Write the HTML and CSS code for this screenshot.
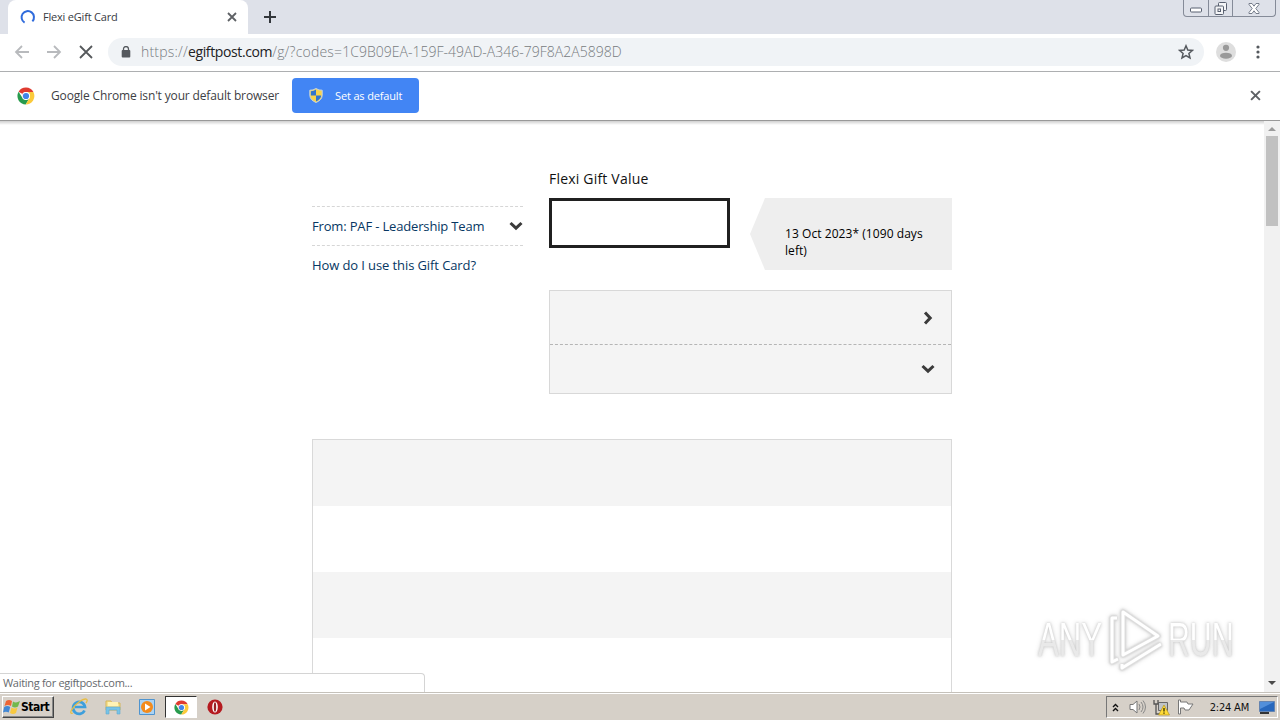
FILE: index.html
```html
<!DOCTYPE html>
<html lang="en">
<head>
<meta charset="utf-8">
<title>Flexi eGift Card</title>
<link rel="stylesheet" href="styles.css">
</head>
<body>
<svg class="defs" width="0" height="0" aria-hidden="true">
  <symbol id="chrome" viewBox="0 0 18 18">
    <circle cx="9" cy="9" r="8.5" fill="#fff"/>
    <path d="M9 9 1.6 4.7A8.5 8.5 0 0 1 16.4 5H9a4 4 0 0 0-3.5 6z" fill="#df3b30"/>
    <path d="M1.6 4.7A8.5 8.5 0 0 0 8.7 17.5L12.5 11 9 13 5.5 11z" fill="#289b4d"/>
    <path d="M16.4 5A8.5 8.5 0 0 1 8.7 17.5L12.5 11A4 4 0 0 0 9 5z" fill="#fbca3b"/>
    <circle cx="9" cy="9" r="4" fill="#fff"/><circle cx="9" cy="9" r="3.1" fill="#4285e8"/>
  </symbol>
  <symbol id="close" viewBox="0 0 10 10"><path d="m1 1 8 8M9 1 1 9" fill="none" stroke="currentColor" stroke-width="1.8"/></symbol>
  <symbol id="chevron" viewBox="0 0 14 10"><path d="m1.5 2 5.5 5.2L12.5 2" fill="none" stroke="#3b3b3b" stroke-width="3"/></symbol>
</svg>
<div class="screen">
  <header class="tabstrip">
    <div class="tab">
      <svg class="spinner" width="16" height="16" viewBox="0 0 16 16"><path d="M4.6 13.6A6.2 6.2 0 1 1 12.4 12.4" fill="none" stroke="#2f6bdc" stroke-width="2"/></svg>
      <span class="tab-title">Flexi eGift Card</span>
      <svg class="tab-close" width="10" height="10"><use href="#close"/></svg>
    </div>
    <svg class="new-tab" width="12" height="12" viewBox="0 0 12 12"><path d="M6 0v12M0 6h12" stroke="#32363b" stroke-width="2"/></svg>
    <div class="window-buttons">
      <span><svg width="12" height="6" viewBox="0 0 12 6"><rect x=".5" y="1" width="11" height="4" rx="1" fill="#fff" stroke="#596070"/></svg></span>
      <span><svg width="14" height="14" viewBox="0 0 14 14" fill="#f4f5f7" stroke="#596070"><rect x="4.500" y=".5" width="8" height="8" rx="1"/><rect x="1" y="4" width="8.500" height="8.500" rx="1"/><rect x="4" y="7" width="2.500" height="2.500"/></svg></span>
      <span><svg width="12" height="11" viewBox="0 0 12 11"><path d="M1 .5h3l2 2.700L8 .5h3v1L7.800 5.500 11 9.500v1H8L6 7.800 4 10.500H1v-1l3.200-4L1 1.500z" fill="#fff" stroke="#697080" stroke-width=".9"/></svg></span>
    </div>
  </header>

  <nav class="toolbar">
    <svg class="nav-icon faded back" width="16" height="14" viewBox="0 0 16 14"><path d="M15 7H2M8 1 2 7l6 6"/></svg>
    <svg class="nav-icon faded" width="16" height="14" viewBox="0 0 16 14"><path d="M0 7h13M7 1l6 6-6 6"/></svg>
    <svg class="nav-icon stop" width="14" height="14" viewBox="0 0 14 14"><path d="m1 1 12 12M13 1 1 13"/></svg>
    <div class="omnibox">
      <svg class="lock" width="10" height="12" viewBox="0 0 10 12"><rect x=".7" y="4" width="8.600" height="7.500" rx="1" fill="#55595e"/><path d="M2.500 5V3a2.500 2.500 0 0 1 5 0v2" fill="none" stroke="#55595e" stroke-width="1.300"/></svg>
      <span class="url"><span class="scheme">https://</span><span class="host">egiftpost.com</span><span class="path">/g/?codes=</span><span class="code">1C9B09EA-159F-49AD-A346-79F8A2A5898D</span></span>
      <svg class="star" width="16" height="16" viewBox="0 0 16 16"><path d="m8 1.800 1.800 4.200 4.600.4-3.500 3 1.100 4.500L8 11.500l-4 2.400 1.100-4.500-3.500-3L6.200 6z" fill="none" stroke="#55595e" stroke-width="1.500"/></svg>
    </div>
    <svg class="avatar" width="20" height="20" viewBox="0 0 20 20"><circle cx="10" cy="10" r="10" fill="#dedede"/><circle cx="10" cy="5.800" r="3.100" fill="#999"/><ellipse cx="10" cy="13.700" rx="6" ry="3" fill="#999"/></svg>
    <svg class="more" width="4" height="14" viewBox="0 0 4 14" fill="#55595e"><circle cx="2" cy="2" r="1.600"/><circle cx="2" cy="7" r="1.600"/><circle cx="2" cy="12" r="1.600"/></svg>
  </nav>

  <section class="infobar">
    <svg class="info-logo" width="18" height="18"><use href="#chrome"/></svg>
    <span class="info-text">Google Chrome isn't your default browser</span>
    <button class="default-button">
      <svg width="14" height="15" viewBox="0 0 14 15"><path d="M7 .5q3 2 6.200 1.700V7q0 5-6.200 7.500Q.8 12 .8 7V2.200Q4 2.500 7 .5z" fill="#f8d34c"/><path d="M7 1.500v6H1.800V3.200Q5 3 7 1.500zM7 7.500h5.200Q12 11 7 13.400z" fill="#3275cd"/><path d="M7 .5q3 2 6.200 1.700V7q0 5-6.200 7.500Q.8 12 .8 7V2.200Q4 2.500 7 .5z" fill="none" stroke="#c6d5df"/></svg>
      <span>Set as default</span>
    </button>
    <svg class="info-close" width="11" height="11"><use href="#close"/></svg>
  </section>

  <div class="viewport">
    <main class="page">
      <div class="summary">
        <aside class="links">
          <div class="from"><span>From: PAF - Leadership Team</span><svg width="14" height="10"><use href="#chevron"/></svg></div>
          <div class="how">How do I use this Gift Card?</div>
        </aside>
        <section class="gift">
          <div class="gift-label">Flexi Gift Value</div>
          <div class="gift-row">
            <div class="amount"></div>
            <div class="expiry"><span class="expiry-date">13 Oct 2023* (1090 days</span><span class="expiry-left">left)</span></div>
          </div>
          <div class="accordion">
            <div class="item first"><svg class="right" width="14" height="10"><use href="#chevron"/></svg></div>
            <div class="item"><svg width="14" height="10"><use href="#chevron"/></svg></div>
          </div>
        </section>
      </div>
      <div class="stripes"><div></div><div></div><div></div><div></div></div>
    </main>
    <div class="scrollbar">
      <svg width="8" height="4" viewBox="0 0 8 4"><path d="M0 4 4 0l4 4z" fill="#9b9b9b"/></svg>
      <div class="thumb"></div>
      <svg class="down" width="8" height="4" viewBox="0 0 8 4"><path d="m0 0 4 4 4-4z" fill="#4b4b4b"/></svg>
    </div>
    <div class="status"><span>Waiting for egiftpost.com...</span></div>
    <div class="watermark">
      <span class="any">ANY</span>
      <svg width="60" height="64" viewBox="0 0 60 64" fill="none" stroke-linejoin="round"><g stroke="#dedede" stroke-width="5"><path d="M17 4v43l35-19z"/><path d="M11 10H6v44l6-3M16 56v4l39-24"/></g><g stroke="#fff" stroke-width="3"><path d="M17 4v43l35-19z"/><path d="M11 10H6v44l6-3M16 56v4l39-24"/></g></svg>
      <span class="run">RUN</span>
    </div>
  </div>

  <footer class="taskbar">
    <div class="start">
      <svg width="18" height="16" viewBox="0 0 18 16"><path d="M3 2q3-2 6 0L8 7Q5 5 1.500 7z" fill="#ee6535"/><path d="M10 2.500q3 2 7-.5l-2 5.500q-3 2-6 0z" fill="#72b84c"/><path d="M1.200 8q3-2 6 0l-1.500 5.500Q3 12 0 13.500z" fill="#4388d5"/><path d="M8.500 8.500q3 2 6 0L13 14q-3 2-6 0z" fill="#f8c940"/></svg>
      <span>Start</span>
    </div>
    <div class="quick">
      <svg width="18" height="18" viewBox="0 0 18 18" fill="none"><path d="M14.500 12.500A6 6 0 1 1 15 9H5" stroke="#3e9fdc" stroke-width="2.700"/><path d="M3 15C-2 17 2 9 9 4s10-3 7 1" stroke="#e8bd42" stroke-width="1.300"/></svg>
    </div>
    <div class="quick">
      <svg width="18" height="18" viewBox="0 0 18 18"><path d="M2 3h5l1 2h8v7H2z" fill="#f6e08c" stroke="#d5b65b"/><path d="M4 4h10v4H4z" fill="#fff3b5"/><path d="M2 9h14v7h-3v-4H5v4H2z" fill="#77c4e7" stroke="#60a9d2" stroke-width=".6"/></svg>
    </div>
    <div class="quick">
      <svg width="16" height="16" viewBox="0 0 16 16"><path d="M.5.500h15v15H.5z" fill="#abd3f3" stroke="#4f94cf"/><circle cx="8" cy="8" r="6" fill="#f38b1c"/><path d="m6 4.500 5.500 3.500L6 11.500z" fill="#fff"/></svg>
    </div>
    <div class="quick active"><svg width="15" height="15"><use href="#chrome"/></svg></div>
    <div class="quick">
      <svg width="16" height="16" viewBox="0 0 16 16"><circle cx="8" cy="8" r="7.600" fill="#b51a20"/><ellipse cx="8" cy="8" rx="2.800" ry="5.600" fill="#fff"/><ellipse cx="8" cy="8" rx="1.200" ry="4.800" fill="#982024"/></svg>
    </div>
    <div class="tray">
      <svg width="7" height="9" viewBox="0 0 7 9"><path d="m1 4 2.500-2.500L6 4M1 8l2.500-2.500L6 8" fill="none" stroke="#111" stroke-width="1.400"/></svg>
      <svg class="sound" width="17" height="16" viewBox="0 0 17 16"><path d="M1 5.500h3L8 2v12l-4-3.500H1z" fill="#fff" stroke="#777"/><path d="M10 5q2 3 0 6M12 3q4 5 0 10M14 1.500q5 6.500 0 13" fill="none" stroke="#888"/></svg>
      <svg class="network" width="17" height="17" viewBox="0 0 17 17"><path d="M5.500 3.500h9v8h-9z" fill="#bfc3c7" stroke="#666"/><path d="M1 1v4h4V1M3 5v10h4" fill="none" stroke="#555" stroke-width="1.300"/><path d="m11 6 5.500 10h-11z" fill="#ffdb36" stroke="#b5931d" stroke-width=".7"/><path d="M11 9v3.500M11 13.500v1.200" stroke="#332b00" stroke-width="1.300"/></svg>
      <svg class="flag" width="17" height="16" viewBox="0 0 17 16"><path d="M1.500 1v14h2V9H7l1 2h4l4-6h-5l-1-2H3.500V1z" fill="#fff" stroke="#777"/></svg>
      <span class="clock">2:24 AM</span>
      <svg class="desktop" width="16" height="15" viewBox="0 0 16 15"><path d="M.5 1.500h15v10H.5z" fill="#2868bd" stroke="#6584b0"/><path d="M1 2h14L1 9z" fill="#528fda"/><path d="M1 13h9" stroke="#333" stroke-width="2"/></svg>
    </div>
  </footer>
</div>
</body>
</html>
```

FILE: styles.css
```css
* { box-sizing: border-box; }
body { margin: 0; overflow: hidden; background: #fff; font-family: "Open Sans", "Noto Sans", sans-serif; }
svg { display: block; flex: none; }
.defs { position: absolute; }
.screen { display: flex; flex-direction: column; width: 1280px; height: 720px; overflow: hidden; white-space: nowrap; }
.tabstrip { display: flex; height: 34px; background: #dee1e9; flex: none; }
.tab { display: flex; align-items: center; width: 240px; height: 34px; margin-left: 8px; padding: 0 11px 0 12px; background: #fff; border-radius: 8px 8px 0 0; color: #383b3f; }
.tab-title { margin-left: 7px; font-size: 11px; letter-spacing: -.2px; line-height: 18px; }
.tab-close { margin-left: auto; color: #5e6165; }
.new-tab { margin: 11px 0 0 16px; }
.window-buttons { display: flex; width: 93px; height: 17px; margin-left: auto; margin-right: 4px; border: 1px solid #858b98; border-top: 0; border-radius: 0 0 4px 4px; overflow: hidden; }
.window-buttons span { display: flex; justify-content: center; align-items: center; width: 25px; border-right: 1px solid #858b98; }
.window-buttons span:first-child { padding-top: 4px; }
.window-buttons span:nth-child(2) { padding-top: 1px; }
.window-buttons span:last-child { width: 42px; border: 0; }
.toolbar { display: flex; align-items: center; height: 38px; padding: 0 0 1px 14px; border-bottom: 1px solid #adafb1; flex: none; }
.nav-icon { fill: none; stroke: #56595c; stroke-width: 1.8; }
.faded { margin-right: 16px; stroke: #b8babd; }
.back { margin-right: 17px; }
.omnibox { display: flex; align-items: center; width: 1096px; height: 28px; margin-left: 15px; padding: 0 10px 0 13px; border-radius: 14px; background: #f0f3f6; }
.url { margin-left: 10px; color: #777b80; font-size: 14px; line-height: 20px; font-weight: 300; }
.host { color: #202124; font-weight: 400; letter-spacing: -.38px; }
.scheme { letter-spacing: .2px; }
.path { letter-spacing: .2px; }
.code { letter-spacing: .01px; }
.star { margin-left: auto; }
.avatar { margin-left: 12px; }
.more { margin-left: 20px; }
.infobar { display: flex; align-items: center; height: 49px; padding: 0 19px 1px 17px; border-bottom: 1px solid #999; flex: none; }
.info-text { width: 229px; margin-left: 16px; color: #3d4044; font-size: 12px; letter-spacing: -.15px; }
.default-button { display: flex; align-items: center; width: 127px; height: 35px; margin: 0 0 0 12px; padding: 0 0 0 17px; border: 0; border-radius: 4px; background: #4285f4; color: #fff; font: 11px "Open Sans", sans-serif; }
.default-button span { margin-left: 12px; letter-spacing: -.15px; }
.info-close { margin-left: auto; color: #5e6165; }
.viewport { display: flex; position: relative; height: 571px; overflow: hidden; flex: none; background: linear-gradient(#cfcfcf, #fff 4px); }
.page { width: 640px; margin-left: 312px; padding-top: 49px; }
.summary { display: flex; justify-content: space-between; height: 269px; }
.links { width: 211px; padding-top: 36px; color: #073763; font-size: 13px; letter-spacing: -.16px; }
.from { display: flex; align-items: center; justify-content: space-between; height: 40px; border-top: 1px dashed #d6d6d6; border-bottom: 1px dashed #d6d6d6; }
.how { padding-top: 9px; line-height: 20px; letter-spacing: -.1px; }
.gift { width: 403px; }
.gift-label { height: 28px; line-height: 18px; font-size: 14px; letter-spacing: .2px; color: #111; }
.gift-row { display: flex; justify-content: space-between; height: 72px; }
.amount { width: 181px; height: 50px; border: 3px solid #202020; background: #fff; }
.expiry { display: flex; flex-direction: column; width: 202px; padding: 27px 0 0 35px; background: #eee; clip-path: polygon(15px 0, 100% 0, 100% 100%, 15px 100%, 0 50%); font-size: 12px; line-height: 17px; letter-spacing: .06px; color: #000; }
.accordion { height: 104px; margin-top: 20px; border: 1px solid #d8d8d8; background: #f4f4f4; }
.item { display: flex; align-items: center; justify-content: flex-end; height: 48px; padding-right: 16px; }
.first { height: 54px; border-bottom: 1px dashed #b5b5b5; }
.right { transform: rotate(-90deg); }
.stripes { height: 260px; border: 1px solid #d9d9d9; }
.stripes div { height: 66px; }
.stripes div:nth-child(odd) { background: #f4f4f4; }
.scrollbar { display: flex; flex-direction: column; align-items: center; width: 16px; margin-left: auto; padding: 6px 0 7px; background: #f1f1f1; }
.thumb { width: 12px; height: 90px; margin-top: 5px; background: #c1c1c1; }
.down { margin-top: auto; }
.status { position: absolute; left: -1px; bottom: 0; width: 426px; height: 19px; padding-left: 3px; border: 1px solid #d4d4d4; border-bottom: 0; border-top-right-radius: 4px; background: #fff; color: #66696d; font-size: 11px; line-height: 18px; letter-spacing: -.3px; }
.watermark { display: flex; align-items: center; position: absolute; left: 1038px; top: 487px; width: 195px; height: 64px; color: #fff; font: 48px/60px "Liberation Sans", sans-serif; filter: drop-shadow(0 0 1px #c8c8c8) drop-shadow(0 0 2px #ddd); }
.watermark svg { margin-left: 4px; }
.watermark span { flex: none; width: 104px; margin-right: -40px; transform: scaleX(.65); transform-origin: left; background: linear-gradient(#fff 50%, #e9e9e9 50%); background-clip: text; color: transparent; }
.watermark .run { margin-left: 2px; transform: scaleX(.63); }
.taskbar { display: flex; align-items: center; height: 28px; padding: 1px 2px 0; border-top: 1px solid #c5c1ba; box-shadow: inset 0 1px #fff; background: #d6d0c8; flex: none; }
.start { display: flex; align-items: center; width: 52px; height: 22px; margin-right: 8px; padding-left: 0; border: 1px solid; border-color: #fff #444 #444 #fff; box-shadow: inset -1px -1px #888; color: #000; font: bold 12px "DejaVu Sans Condensed", "Open Sans", sans-serif; letter-spacing: -.5px; }
.quick { display: flex; align-items: center; justify-content: center; width: 34px; height: 22px; }
.quick.active { width: 32px; margin: 0 1px; background: #fff; border: 1px solid; border-color: #333 #fff #fff #333; }
.tray { display: flex; align-items: center; width: 172px; height: 22px; margin-left: auto; padding: 0 2px 0 5px; border: 1px solid; border-color: #777 #fff #fff #777; color: #111; }
.sound { margin-left: 10px; }
.network { margin-left: 7px; }
.flag { margin-left: 7px; }
.clock { margin-left: auto; font: 11px "DejaVu Sans Condensed", sans-serif; letter-spacing: -.2px; }
.desktop { margin-left: 10px; }
```
